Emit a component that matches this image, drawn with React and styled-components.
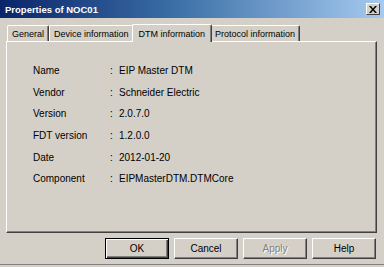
import React from "react";
import styled, { createGlobalStyle } from "styled-components";

const GlobalStyle = createGlobalStyle`
  html, body {
    margin: 0;
    padding: 0;
    background: #d4d0c8;
  }
  body {
    font-family: "Liberation Sans", Arial, sans-serif;
    font-size: 10px;
    color: #000;
  }
`;

const Window = styled.div`
  width: 384px;
  height: 265px;
  background: #d4d0c8;
  display: flex;
  flex-direction: column;
  border-bottom: 1px solid #808080;
  box-sizing: border-box;
`;

const TitleBar = styled.div`
  height: 18px;
  display: flex;
  align-items: center;
  justify-content: space-between;
  padding: 0 4px 0 5px;
  background: linear-gradient(to right, #0a246a 0%, #3a6ea5 45%, #a6caf0 100%);
`;

const Title = styled.span`
  color: #fff;
  font-weight: bold;
  font-size: 9.5px;
`;

const CloseButton = styled.div`
  width: 14px;
  height: 12px;
  background: #d4d0c8;
  box-sizing: border-box;
  border-top: 1px solid #fff;
  border-left: 1px solid #fff;
  border-right: 1px solid #404040;
  border-bottom: 1px solid #404040;
  display: flex;
  align-items: center;
  justify-content: center;
`;

const Body = styled.div`
  padding: 5px 7px 0 6px;
  display: flex;
  flex-direction: column;
`;

const TabRow = styled.div`
  display: flex;
  align-items: flex-end;
  height: 18px;
  padding-left: 1px;
  position: relative;
  z-index: 1;
`;

const Tab = styled.div`
  height: ${(p) => (p.active ? "18px" : "16px")};
  box-sizing: border-box;
  padding: 0 ${(p) => (p.active ? "6px" : "4px")};
  margin: 0 ${(p) => (p.active ? "-2px" : "0")};
  display: flex;
  align-items: center;
  background: #d4d0c8;
  border-top: 1px solid #fff;
  border-left: 1px solid #fff;
  border-right: 1px solid #404040;
  box-shadow: inset -1px 0 0 #808080;
  border-radius: 2px 2px 0 0;
  font-size: 9px;
  position: relative;
  z-index: ${(p) => (p.active ? 2 : 1)};
  margin-bottom: ${(p) => (p.active ? "-1px" : "0")};
`;

const Panel = styled.div`
  height: 192px;
  box-sizing: border-box;
  border-top: 1px solid #fff;
  border-left: 1px solid #fff;
  border-right: 1px solid #404040;
  border-bottom: 1px solid #404040;
  box-shadow: inset -1px -1px 0 #808080;
  padding: 18px 0 0 26px;
`;

const InfoGrid = styled.div`
  display: grid;
  grid-template-columns: 77px 9px auto;
  grid-auto-rows: 21.6px;
  align-items: center;
  font-size: 10px;
`;

const ButtonRow = styled.div`
  display: flex;
  justify-content: flex-end;
  gap: 5px;
  padding: 5px 1px 0 0;
`;

const Button = styled.div`
  width: 64px;
  height: 21px;
  box-sizing: border-box;
  display: flex;
  align-items: center;
  justify-content: center;
  font-size: 10px;
  background: #d4d0c8;
  border-top: 1px solid ${(p) => (p.primary ? "#000" : "#fff")};
  border-left: 1px solid ${(p) => (p.primary ? "#000" : "#fff")};
  border-right: 1px solid ${(p) => (p.primary ? "#000" : "#404040")};
  border-bottom: 1px solid ${(p) => (p.primary ? "#000" : "#404040")};
  box-shadow: ${(p) =>
    p.primary
      ? "inset 1px 1px 0 #fff, inset -1px -1px 0 #404040, inset -2px -2px 0 #808080"
      : "inset -1px -1px 0 #808080"};
  color: ${(p) => (p.disabled ? "#808080" : "#000")};
  text-shadow: ${(p) => (p.disabled ? "1px 1px 0 #fff" : "none")};
`;

const rows = [
  ["Name", "EIP Master DTM"],
  ["Vendor", "Schneider Electric"],
  ["Version", "2.0.7.0"],
  ["FDT version", "1.2.0.0"],
  ["Date", "2012-01-20"],
  ["Component", "EIPMasterDTM.DTMCore"],
];

const tabs = ["General", "Device information", "DTM information", "Protocol information"];

export default function App() {
  return (
    <>
      <GlobalStyle />
      <Window>
        <TitleBar>
          <Title>Properties of NOC01</Title>
          <CloseButton>
            <svg width="8" height="7" viewBox="0 0 8 7">
              <path d="M0 0h2l2 2.5L6 0h2L5 3.5 8 7H6L4 4.5 2 7H0l3-3.5z" fill="#000" />
            </svg>
          </CloseButton>
        </TitleBar>
        <Body>
          <TabRow>
            {tabs.map((t) => (
              <Tab key={t} active={t === "DTM information"}>
                {t}
              </Tab>
            ))}
          </TabRow>
          <Panel>
            <InfoGrid>
              {rows.map(([k, v]) => (
                <React.Fragment key={k}>
                  <span>{k}</span>
                  <span>:</span>
                  <span>{v}</span>
                </React.Fragment>
              ))}
            </InfoGrid>
          </Panel>
          <ButtonRow>
            <Button primary>OK</Button>
            <Button>Cancel</Button>
            <Button disabled>Apply</Button>
            <Button>Help</Button>
          </ButtonRow>
        </Body>
      </Window>
    </>
  );
}
